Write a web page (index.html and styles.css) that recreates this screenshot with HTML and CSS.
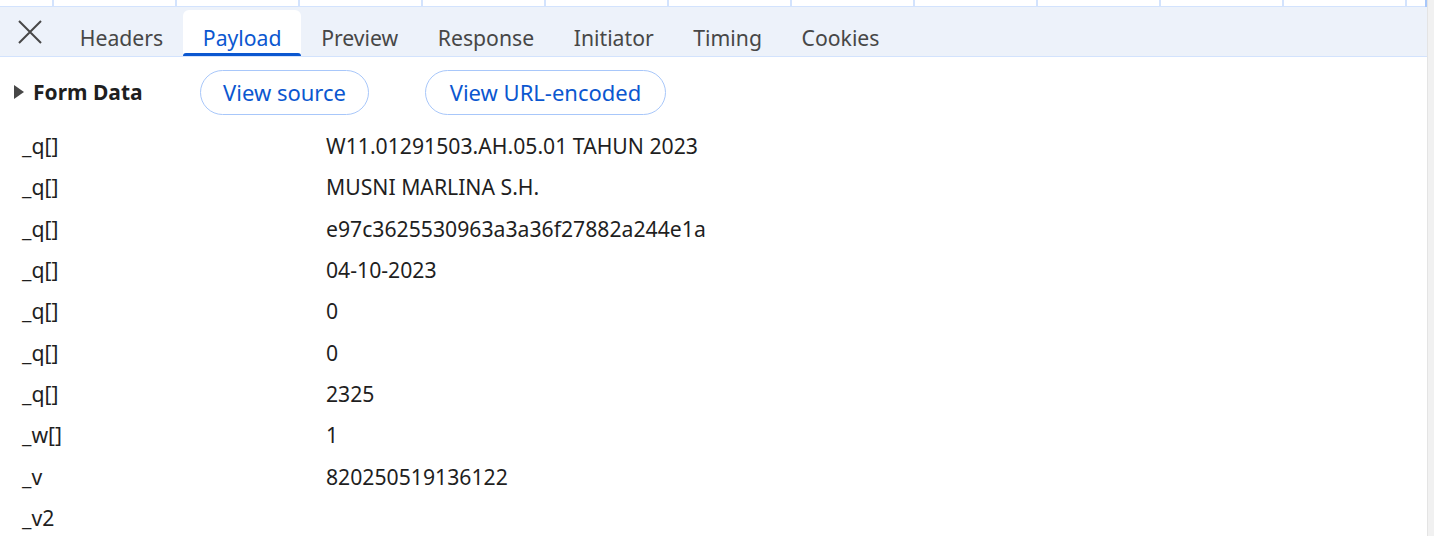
FILE: index.html
```html
<!DOCTYPE html>
<html>
<head>
<meta charset="utf-8">
<link rel="stylesheet" href="styles.css">
</head>
<body>
<div class="app">
  <div class="main">
    <div class="cols">
      <span class="col"></span><span class="col"></span><span class="col"></span><span class="col"></span><span class="col"></span><span class="col"></span><span class="col"></span><span class="col"></span><span class="col"></span><span class="col"></span><span class="col"></span><span class="col"></span>
    </div>
    <div class="tabbar">
      <button class="close" aria-label="Close">
        <svg width="24" height="24" viewBox="0 0 24 24"><path d="M1 1 L23 23 M23 1 L1 23" stroke="#474747" stroke-width="2" fill="none"/></svg>
      </button>
      <div class="tab">Headers</div>
      <div class="tab active">Payload</div>
      <div class="tab">Preview</div>
      <div class="tab">Response</div>
      <div class="tab">Initiator</div>
      <div class="tab">Timing</div>
      <div class="tab">Cookies</div>
    </div>
    <div class="content">
      <div class="section-head">
        <div class="title"><span class="tri"></span>Form Data</div>
        <button class="pill pill-source">View source</button>
        <button class="pill pill-url">View URL-encoded</button>
      </div>
      <div class="rows">
        <div class="row"><span class="k">_q[]</span><span class="v">W11.01291503.AH.05.01 TAHUN 2023</span></div>
        <div class="row"><span class="k">_q[]</span><span class="v">MUSNI MARLINA S.H.</span></div>
        <div class="row"><span class="k">_q[]</span><span class="v">e97c3625530963a3a36f27882a244e1a</span></div>
        <div class="row"><span class="k">_q[]</span><span class="v">04-10-2023</span></div>
        <div class="row"><span class="k">_q[]</span><span class="v">0</span></div>
        <div class="row"><span class="k">_q[]</span><span class="v">0</span></div>
        <div class="row"><span class="k">_q[]</span><span class="v">2325</span></div>
        <div class="row"><span class="k">_w[]</span><span class="v">1</span></div>
        <div class="row"><span class="k">_v</span><span class="v">820250519136122</span></div>
        <div class="row"><span class="k">_v2</span><span class="v"></span></div>
      </div>
    </div>
  </div>
  <div class="scrollbar"><div class="thumb"></div></div>
</div>
</body>
</html>
```
FILE: styles.css
```css
* { box-sizing: border-box; }
html, body { margin: 0; padding: 0; height: 100%; overflow: hidden; background: #fff; }
body { font-family: "Noto Sans", "Open Sans", sans-serif; color: #1f1f1f; }
.app { display: flex; height: 536px; }
.main { flex: 1; min-width: 0; display: flex; flex-direction: column; }
.cols { height: 7px; border-bottom: 1px solid #d3e3fd; display: flex; padding-left: 52px; gap: 121px; }
.col { width: 2px; height: 6px; background: #d3e3fd; flex: none; }
.tabbar { height: 50px; background: #edf2fa; border-bottom: 1px solid #d3e3fd; display: flex; align-items: flex-end; }
.close { width: 60px; height: 49px; border: 0; background: none; padding: 13px 0 0 18px; align-self: stretch; display: flex; align-items: flex-start; }
.tab { height: 46px; padding: 9px 19.8px 0 19.8px; font-size: 21.2px; color: #474747; display: flex; align-items: center; position: relative; }
.tab.active { background: #fff; color: #0b57d0; border-radius: 6px 6px 0 0; }
.tab.active::after { content: ""; position: absolute; left: 0; right: 0; bottom: 0; height: 3px; background: #0b57d0; border-radius: 3px 3px 0 0; }
.content { padding: 12px 0 0 0; }
.section-head { display: flex; align-items: center; height: 46px; }
.title { display: flex; align-items: center; font-weight: 700; font-size: 21px; color: #1f1f1f; padding-left: 14px; width: 200px; }
.tri { width: 0; height: 0; border-top: 7px solid transparent; border-bottom: 7px solid transparent; border-left: 10px solid #474747; margin-right: 9px; }
.pill { height: 45px; border: 1px solid #a8c7fa; border-radius: 23px; background: #fff; color: #0b57d0; font-family: inherit; font-size: 22px; padding: 0; display: flex; align-items: center; justify-content: center; }
.pill-source { width: 169px; }
.pill-url { margin-left: 56px; width: 241px; }
.rows { padding-top: 10px; }
.row { display: flex; height: 41.3px; align-items: center; font-size: 21.2px; }
.k { width: 326px; padding-left: 22px; flex: none; }
.v { flex: 1; }
.scrollbar { width: 7px; background: #f1f1f1; border-left: 1px solid #e4e4e4; position: relative; }
.thumb { position: absolute; left: -3px; top: 0; width: 2px; height: 7px; background: #a8c7fa; }
```
